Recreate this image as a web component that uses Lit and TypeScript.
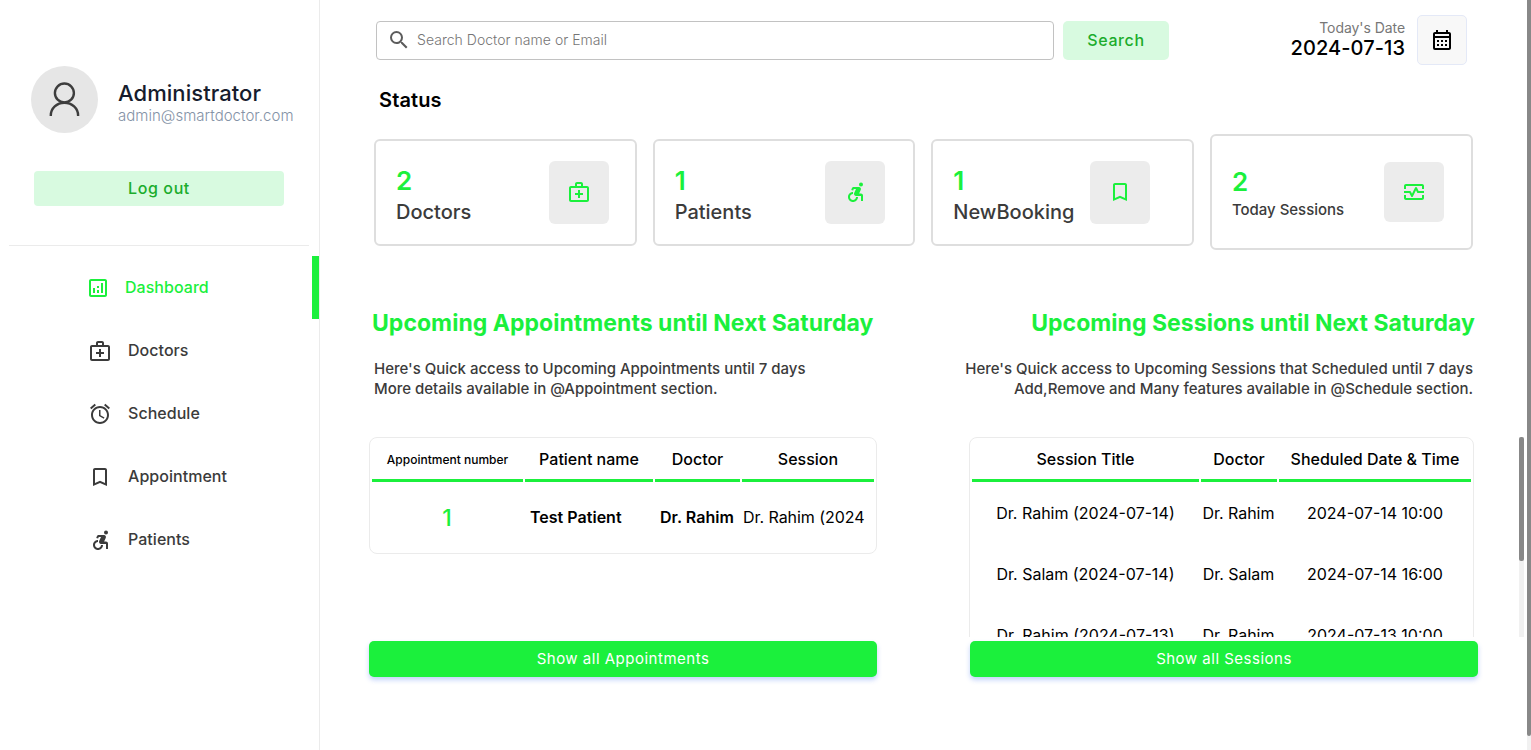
import { LitElement, html, css, svg } from "lit";
import { customElement, property } from "lit/decorators.js";
import { classMap } from "lit/directives/class-map.js";

const ICONS: Record<string, string> = {
  dashboard:
    "M19 3H5c-1.1 0-2 .9-2 2v14c0 1.1.9 2 2 2h14c1.1 0 2-.9 2-2V5c0-1.1-.9-2-2-2zm0 16H5V5h14v14zM7 12h2v5H7zM15 7h2v10h-2zM11 14h2v3h-2zM11 10h2v2h-2z",
  doctor:
    "M20 6h-4V4c0-1.1-.9-2-2-2h-4c-1.1 0-2 .9-2 2v2H4c-1.1 0-2 .9-2 2v12c0 1.1.9 2 2 2h16c1.1 0 2-.9 2-2V8c0-1.1-.9-2-2-2zM10 4h4v2h-4V4zm10 16H4V8h16v12zM13 10h-2v3H8v2h3v3h2v-3h3v-2h-3z",
  alarm:
    "M12.5 8H11v6l4.75 2.85.75-1.23-4-2.37zm4.837-6.19 4.607 3.845-1.28 1.535-4.61-3.843zm-10.674 0 1.282 1.536L3.337 7.19l-1.28-1.536zM12 4c-4.97 0-9 4.03-9 9s4.03 9 9 9 9-4.03 9-9-4.03-9-9-9zm0 16c-3.86 0-7-3.14-7-7s3.14-7 7-7 7 3.14 7 7-3.14 7-7 7z",
  bookmark:
    "M17 3H7c-1.1 0-2 .9-2 2v16l7-3 7 3V5c0-1.1-.9-2-2-2zm0 15-5-2.18L7 18V5h10v13z",
  patient:
    "M20 4.54a2 2 0 1 1-4 0a2 2 0 0 1 4 0zM15 17h-2c0 1.65-1.35 3-3 3s-3-1.35-3-3 1.35-3 3-3v-2c-2.76 0-5 2.24-5 5s2.24 5 5 5 5-2.24 5-5zm3-3.5h-1.86l1.67-3.67C18.42 8.5 17.44 7 15.96 7h-5.2c-.81 0-1.54.47-1.87 1.2L8.22 10l1.92.53.65-1.53H13l-1.83 4.1c-.6 1.33.39 2.9 1.85 2.9H18v5h2v-5.5c0-1.1-.9-2-2-2z",
  session:
    "M20 4H4c-1.1 0-2 .9-2 2v3h2V6h16v3h2V6c0-1.1-.9-2-2-2zM20 18H4v-3H2v3c0 1.1.9 2 2 2h16c1.1 0 2-.9 2-2v-3h-2v3zM14.89 7.55c-.34-.68-1.45-.68-1.79 0L10 13.76l-1.11-2.21A.988.988 0 0 0 8 11H2v2h5.38l1.72 3.45c.18.34.52.55.9.55s.72-.21.89-.55L14 10.24l1.11 2.21c.17.34.51.55.89.55h6v-2h-5.38l-1.73-3.45z",
  search:
    "M15.5 14h-.79l-.28-.27A6.471 6.471 0 0 0 16 9.5 6.5 6.5 0 1 0 9.5 16c1.61 0 3.09-.59 4.23-1.57l.27.28v.79l5 4.99L20.49 19l-4.99-5zm-6 0C7.01 14 5 11.99 5 9.5S7.01 5 9.5 5 14 7.01 14 9.5 11.99 14 9.5 14z",
  calendar:
    "M19 4h-1V2h-2v2H8V2H6v2H5c-1.11 0-1.99.9-1.99 2L3 20a2 2 0 0 0 2 2h14c1.1 0 2-.9 2-2V6c0-1.1-.9-2-2-2zm0 16H5V10h14v10zm0-12H5V6h14v2zM9 14H7v-2h2v2zm4 0h-2v-2h2v2zm4 0h-2v-2h2v2zm-8 4H7v-2h2v2zm4 0h-2v-2h2v2zm4 0h-2v-2h2v2z",
};

@customElement("ui-icon")
export class UiIcon extends LitElement {
  static styles = css`
    :host { display: block; width: 24px; height: 24px; flex: none; }
    .glyph { display: block; width: 24px; height: 24px; fill: currentColor; }
  `;
  @property() name = "";
  render() {
    return html`<svg class="glyph" viewBox="0 0 24 24">${svg`<path d=${ICONS[this.name] ?? ""}></path>`}</svg>`;
  }
}

@customElement("side-bar")
export class SideBar extends LitElement {
  static styles = css`
    :host { display: block; box-sizing: border-box; width: 320px; height: 750px; flex: none; border-right: 1px solid #ebebeb; }
    .profile { display: flex; padding: 66px 0 0 31px; gap: 20px; height: 67px; }
    .avatar { display: block; width: 67px; height: 67px; flex: none; }
    .who { padding-top: 13px; white-space: nowrap; }
    .name { font-size: 22px; line-height: 28px; font-weight: 500; color: #161c2d; letter-spacing: .06px; }
    .mail { font-size: 15px; line-height: 18px; font-weight: 300; color: #8492a6; letter-spacing: .03px; }
    .logout { margin: 38px 0 0 34px; width: 250px; height: 35px; border-radius: 4px; background: #d8fae0; color: #1bac2c;
      font-size: 16px; font-weight: 500; line-height: 35px; letter-spacing: .6px; text-align: center; }
    .rule { height: 1px; background: #ebebeb; margin: 39px 10px 10px 9px; }
    .item { display: flex; align-items: flex-start; box-sizing: border-box; height: 63px; padding: 20px 0 0 88px; gap: 16px;
      font-size: 16px; font-weight: 500; line-height: 23px; color: #3b3b3b; letter-spacing: .04px; }
    .item.active { color: #1bf03c; border-right: 7px solid #1bf03c; padding-left: 86px; gap: 15px; }
  `;
  items = [
    ["dashboard", "Dashboard"],
    ["doctor", "Doctors"],
    ["alarm", "Schedule"],
    ["bookmark", "Appointment"],
    ["patient", "Patients"],
  ];
  render() {
    return html`
      <div class="profile">
        <svg class="avatar" viewBox="0 0 67 67">
          <circle cx="33.5" cy="33.5" r="33.5" fill="#e6e6e6"></circle>
          <g fill="none" stroke="#3d3d3d" stroke-width="2.4">
            <circle cx="33.4" cy="27" r="9.5"></circle>
            <path d="M19.800 50v-.6c0-7 6-12.700 13.600-12.700S47.100 42.400 47.100 49.400V50"></path>
          </g>
        </svg>
        <div class="who">
          <div class="name">Administrator</div>
          <div class="mail">admin@smartdoctor.com</div>
        </div>
      </div>
      <div class="logout">Log out</div>
      <div class="rule"></div>
      ${this.items.map(
        ([icon, label], i) => html`<div class=${classMap({ item: true, active: i === 0 })}>
          <ui-icon name=${icon}></ui-icon><span>${label}</span>
        </div>`
      )}
    `;
  }
}

@customElement("status-card")
export class StatusCard extends LitElement {
  static styles = css`
    :host { display: flex; box-sizing: border-box; flex: 1 1 0; min-width: 0; height: 107px; border: 2px solid #dedede; border-radius: 6px;
      padding: 20px 0 0 20px; white-space: nowrap; }
    :host([compact]) { height: 116px; padding-top: 26px; }
    .text { flex: none; width: 153px; }
    :host([icon="patient"]) .text { width: 150px; }
    :host([icon="bookmark"]) .text { width: 136.7px; }
    :host([compact]) .text { width: 152px; }
    .count { font-size: 26px; line-height: 32px; margin-top: 4px; font-weight: 600; color: #1bf03c; }
    .label { font-size: 20px; line-height: 26px; margin-top: 2px; font-weight: 500; color: #3b3b3b; }
    :host([compact]) .label { font-size: 15px; line-height: 20px; margin-top: 2px; letter-spacing: -.03px; }
    .badge { display: flex; justify-content: center; box-sizing: border-box; padding-top: 19px; width: 60px; height: 63px; border-radius: 6px;
      background: #ececec; color: #1bf03c; flex: none; }
    :host([compact]) .badge { height: 60px; padding-top: 18px; }
  `;
  @property({ reflect: true }) icon = "";
  @property() count = "";
  @property() label = "";
  @property({ type: Boolean, reflect: true }) compact = false;
  render() {
    return html`<div class="text"><div class="count">${this.count}</div><div class="label">${this.label}</div></div>
      <div class="badge"><ui-icon name=${this.icon}></ui-icon></div>`;
  }
}

@customElement("app-root")
export class AppRoot extends LitElement {
  static styles = css`
    :host { display: flex; position: relative; width: 1531px; height: 750px; overflow: hidden; background: #fff; color: #000; font-family: Inter, sans-serif; }
    .main { flex: 1; min-width: 0; }
    .top { display: flex; padding: 15px 0 0 56px; height: 50px; }
    .field { display: flex; align-items: center; box-sizing: border-box; margin-top: 6px; width: 678px; height: 39px; border: 1px solid #c2c2c2; border-radius: 4px;
      padding-left: 10px; gap: 6px; color: #5c5c5c; }
    .field ui-icon { margin-top: -1px; }
    .hint { font-size: 14px; font-weight: 300; color: #757575; line-height: 20px; margin-top: -1px; letter-spacing: .03px; }
    .go { margin: 6px 0 0 9px; width: 106px; height: 39px; line-height: 39px; border-radius: 5px; background: #d8fae0; color: #1bac2c;
      text-align: center; font-size: 16px; font-weight: 500; letter-spacing: .6px; }
    .today { margin-left: 116px; width: 120px; text-align: right; white-space: nowrap; }
    .today-label { font-size: 14px; line-height: 17px; margin-top: 4px; color: #777; letter-spacing: -.06px; }
    .today-date { font-size: 20px; line-height: 24px; font-weight: 500; letter-spacing: .08px; }
    .cal { display: flex; align-items: center; justify-content: center; box-sizing: border-box; margin-left: 12px; width: 50px; height: 50px; border: 1px solid #e4e9f7;
      border-radius: 5px; background: #f8f8f8; }
    .status { margin: 23px 0 0 59px; font-size: 20px; font-weight: 600; line-height: 24px; letter-spacing: .12px; }
    .cards { display: flex; align-items: center; gap: 16px; width: 1098.6px; margin: 22px 0 0 54px; height: 116px; }
    .lists { display: flex; margin: 57px 0 0 49px; }
    .appts { width: 508px; }
    .sess { width: 555px; margin-left: 92px; }
    .title { font-size: 23px; line-height: 32px; font-weight: 700; color: #1bf03c; padding-left: 3px; white-space: nowrap; letter-spacing: .035px; }
    .blurb { font-size: 15px; line-height: 20px; font-weight: 500; color: #3b3b3b; margin-top: 20px; padding-left: 5px; white-space: nowrap; letter-spacing: -.016px; }
    .sess .title { width: 506px; text-align: right; padding: 0; }
    .sess .blurb { width: 504px; text-align: right; padding: 0; display: flex; flex-direction: column; align-items: flex-end; }
    .scroller { display: flex; height: 200px; margin-top: 38px; overflow: hidden; }
    .table { display: grid; column-gap: 2px; box-sizing: border-box; border: 1px solid #ebebeb; border-radius: 8px; padding: 2px 2px 0; align-content: start; text-align: center; white-space: nowrap; flex: none; }
    .table.a { grid-template-columns: 151px 128px 85px 132px; width: 508px; height: 117px; }
    .table.s { grid-template-columns: 227px 76px 192px; width: 505px; height: 400px; }
    .th { height: 39px; border-bottom: 3px solid #1bf03c; font-size: 16px; line-height: 39px; font-weight: 500; }
    .th.small { font-size: 12px; line-height: 40px; }
    .td { font-size: 16px; line-height: 63px; height: 61px; }
    .s .td:nth-child(3n + 2) { letter-spacing: -.05px; padding-right: 1px; }
    .a .td { height: 70px; line-height: 70px; text-align: left; overflow: hidden; letter-spacing: -.02px; }
    .a .td.num { font-size: 23px; line-height: 72px; font-weight: 500; color: #1bf03c; text-align: center; padding-right: 1px; }
    .a .td.strong { font-weight: 600; padding-left: 5px; letter-spacing: .02px; }
    .a .td.last { padding-left: 1px; letter-spacing: -.05px; }
    .btn { width: 508px; height: 36px; margin-top: 4px; border-radius: 5px; background: #1bf03c; color: #fff; font-size: 15px; line-height: 36px; text-align: center;
      letter-spacing: .5px; box-shadow: 0 3px 5px 0 rgba(57, 108, 240, .3); }
    .sess .btn { margin-left: 1px; }
    .track { width: 5px; height: 200px; background: #f1f1f1; margin-left: 45px; flex: none; }
    .thumb { height: 124px; border-radius: 2px; background: #888; }
    .page-track { position: absolute; right: 0; top: 0; width: 4px; height: 750px; background: #f1f1f1; }
    .page-thumb { height: 736px; background: #888; border-radius: 0 0 2px 2px; }
  `;
  sessions = [
    ["Dr. Rahim (2024-07-14)", "Dr. Rahim", "2024-07-14 10:00"],
    ["Dr. Salam (2024-07-14)", "Dr. Salam", "2024-07-14 16:00"],
    ["Dr. Rahim (2024-07-13)", "Dr. Rahim", "2024-07-13 10:00"],
  ];
  render() {
    return html`
      <side-bar></side-bar>
      <div class="main">
        <div class="top">
          <div class="field"><ui-icon name="search"></ui-icon><span class="hint">Search Doctor name or Email</span></div>
          <div class="go">Search</div>
          <div class="today">
            <div class="today-label">Today's Date</div>
            <div class="today-date">2024-07-13</div>
          </div>
          <div class="cal"><ui-icon name="calendar"></ui-icon></div>
        </div>
        <div class="status">Status</div>
        <div class="cards">
          <status-card icon="doctor" count="2" label="Doctors"></status-card>
          <status-card icon="patient" count="1" label="Patients"></status-card>
          <status-card icon="bookmark" count="1" label="NewBooking"></status-card>
          <status-card icon="session" count="2" label="Today Sessions" compact></status-card>
        </div>
        <div class="lists">
          <div class="appts">
            <div class="title">Upcoming Appointments until Next Saturday</div>
            <div class="blurb">
              <div>Here's Quick access to Upcoming Appointments until 7 days</div>
              <div>More details available in @Appointment section.</div>
            </div>
            <div class="scroller">
              <div class="table a">
                <div class="th small">Appointment number</div>
                <div class="th">Patient name</div>
                <div class="th">Doctor</div>
                <div class="th">Session</div>
                <div class="td num">1</div>
                <div class="td strong">Test Patient</div>
                <div class="td strong">Dr. Rahim</div>
                <div class="td last">Dr. Rahim (2024</div>
              </div>
            </div>
            <div class="btn">Show all Appointments</div>
          </div>
          <div class="sess">
            <div class="title">Upcoming Sessions until Next Saturday</div>
            <div class="blurb">
              <div>Here's Quick access to Upcoming Sessions that Scheduled until 7 days</div>
              <div>Add,Remove and Many features available in @Schedule section.</div>
            </div>
            <div class="scroller">
              <div class="table s">
                <div class="th">Session Title</div>
                <div class="th">Doctor</div>
                <div class="th">Sheduled Date &amp; Time</div>
                ${this.sessions.map((row) => row.map((cell) => html`<div class="td">${cell}</div>`))}
              </div>
              <div class="track"><div class="thumb"></div></div>
            </div>
            <div class="btn">Show all Sessions</div>
          </div>
        </div>
      </div>
      <div class="page-track"><div class="page-thumb"></div></div>
    `;
  }
}
